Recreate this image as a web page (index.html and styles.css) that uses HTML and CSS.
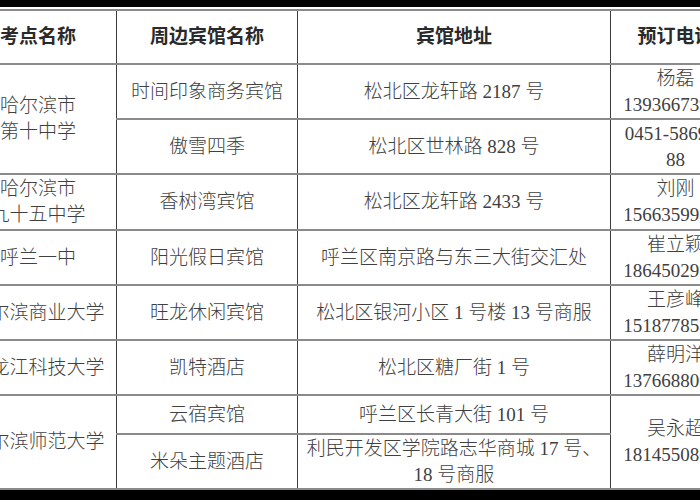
FILE: index.html
```html
<!DOCTYPE html>
<html lang="zh-CN">
<head>
<meta charset="utf-8">
<title>考点周边宾馆</title>
<link rel="stylesheet" href="styles.css">
</head>
<body>
<div class="page">
  <div class="bar bar-top"></div>
  <table class="hotels">
    <colgroup>
      <col class="c1"><col class="c2"><col class="c3"><col class="c4">
    </colgroup>
    <thead>
      <tr class="r-head">
        <th>考点名称</th><th>周边宾馆名称</th><th>宾馆地址</th><th>预订电话</th>
      </tr>
    </thead>
    <tbody>
      <tr class="r-55">
        <td rowspan="2">哈尔滨市<br>第十中学</td>
        <td>时间印象商务宾馆</td>
        <td>松北区龙轩路 2187 号</td>
        <td>杨磊<br>13936673988</td>
      </tr>
      <tr class="r-55">
        <td>傲雪四季</td>
        <td>松北区世林路 828 号</td>
        <td>0451-586999<br>88</td>
      </tr>
      <tr class="r-56">
        <td>哈尔滨市<br>九十五中学</td>
        <td>香树湾宾馆</td>
        <td>松北区龙轩路 2433 号</td>
        <td>刘刚<br>15663599866</td>
      </tr>
      <tr class="r-55">
        <td>呼兰一中</td>
        <td>阳光假日宾馆</td>
        <td>呼兰区南京路与东三大街交汇处</td>
        <td>崔立颖<br>18645029266</td>
      </tr>
      <tr class="r-55">
        <td>哈尔滨商业大学</td>
        <td>旺龙休闲宾馆</td>
        <td>松北区银河小区 1 号楼 13 号商服</td>
        <td>王彦峰<br>15187785566</td>
      </tr>
      <tr class="r-55">
        <td>黑龙江科技大学</td>
        <td>凯特酒店</td>
        <td>松北区糖厂街 1 号</td>
        <td>薛明洋<br>13766880066</td>
      </tr>
      <tr class="r-39">
        <td rowspan="2">哈尔滨师范大学</td>
        <td>云宿宾馆</td>
        <td>呼兰区长青大街 101 号</td>
        <td rowspan="2">吴永超<br>18145508066</td>
      </tr>
      <tr class="r-55">
        <td>米朵主题酒店</td>
        <td>利民开发区学院路志华商城 17 号、18 号商服</td>
      </tr>
    </tbody>
  </table>
  <div class="bar bar-bottom"></div>
</div>
</body>
</html>
```
FILE: styles.css
```css
html, body {
  margin: 0;
  padding: 0;
  overflow: hidden;
  background: #ffffff;
}

.page {
  height: 500px;
  display: flex;
  flex-direction: column;
  overflow: hidden;
}

.bar {
  background: #000000;
  flex: none;
}

.bar-top {
  height: 7px;
}

.bar-bottom {
  height: 10px;
  margin-top: auto;
}

.hotels {
  flex: none;
  margin-top: 2px;
  margin-left: -41px;
  width: 781px;
  table-layout: fixed;
  border-collapse: collapse;
  font-family: "Liberation Serif", "Noto Sans CJK SC", serif;
  font-size: 19px;
  line-height: 26px;
  color: #404040;
}

.c1 { width: 157px; }
.c2 { width: 181px; }
.c3 { width: 313px; }
.c4 { width: 130px; }

.hotels th,
.hotels td {
  border-left: 1px solid #3c3c3c;
  border-right: 1px solid #3c3c3c;
  border-top: 2px solid #8a8a8a;
  border-bottom: 2px solid #8a8a8a;
  padding: 0 3px;
  text-align: center;
  vertical-align: middle;
  white-space: normal;
}

.hotels td {
  font-weight: 300;
}

.hotels th {
  font-weight: 700;
  color: #2a2a2a;
}

.r-head { height: 54px; }
.r-55 { height: 55px; }
.r-56 { height: 56px; }
.r-39 { height: 39px; }
```
